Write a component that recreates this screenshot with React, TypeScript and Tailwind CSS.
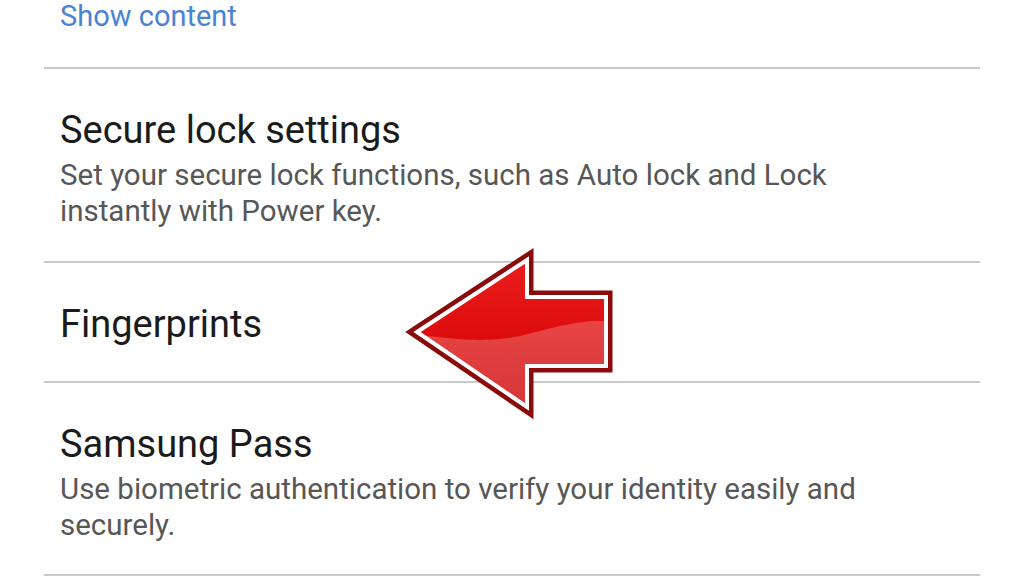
import React from "react";

const Divider = () => <div className="h-[2px] bg-[#c9c9c9]" />;

const RedArrow = () => (
  <svg
    className="absolute left-[396px] top-[244px]"
    width="230"
    height="182"
    viewBox="396 244 230 182"
  >
    <defs>
      <linearGradient id="arrowRed" x1="0" y1="0" x2="0" y2="1">
        <stop offset="0" stopColor="#ea1c1c" />
        <stop offset="0.55" stopColor="#dc0c0c" />
        <stop offset="1" stopColor="#c80a0a" />
      </linearGradient>
      <linearGradient id="arrowGloss" x1="0" y1="0" x2="0" y2="1">
        <stop offset="0" stopColor="#e84444" />
        <stop offset="1" stopColor="#d23434" />
      </linearGradient>
      <clipPath id="arrowClip">
        <polygon points="417,332 527,260 527,297 606,297 606,366 527,366 527,407" />
      </clipPath>
    </defs>
    <polygon
      points="417,332 527,260 527,297 606,297 606,366 527,366 527,407"
      fill="#8a0b0b"
      stroke="#8a0b0b"
      strokeWidth="13"
      strokeLinejoin="miter"
      strokeMiterlimit="6"
    />
    <polygon
      points="417,332 527,260 527,297 606,297 606,366 527,366 527,407"
      fill="url(#arrowRed)"
    />
    <g clipPath="url(#arrowClip)">
      <path
        d="M410 334 C 450 338, 480 344, 520 336 C 555 328, 580 318, 615 322 L 615 420 L 410 420 Z"
        fill="url(#arrowGloss)"
      />
    </g>
    <polygon
      points="417,332 527,260 527,297 606,297 606,366 527,366 527,407"
      fill="none"
      stroke="#ffffff"
      strokeWidth="4"
      strokeLinejoin="miter"
      strokeMiterlimit="6"
    />
  </svg>
);

export default function App() {
  return (
    <div
      className="relative w-[1024px] h-[576px] overflow-hidden bg-white"
      style={{ fontFamily: "Roboto, 'Noto Sans', sans-serif" }}
    >
      <div className="flex flex-col pl-[44px] w-[980px]">
        {/* Show content */}
        <div className="pl-4 pb-[35px]">
          <p className="text-[29px] leading-[32px] text-[#4a82d4]">Show content</p>
        </div>
        <Divider />

        {/* Secure lock settings */}
        <div className="pl-4 pt-[39px] pb-[32px]">
          <p className="text-[38px] leading-[44px] text-[#1b1b1b]">Secure lock settings</p>
          <p className="mt-[5px] text-[29.5px] leading-[36px] text-[#575757]">
            Set your secure lock functions, such as Auto lock and Lock
            <br />
            instantly with Power key.
          </p>
        </div>
        <Divider />

        {/* Fingerprints */}
        <div className="pl-4 pt-[39px] pb-[35px]">
          <p className="text-[38px] leading-[44px] text-[#1b1b1b]">Fingerprints</p>
        </div>
        <Divider />

        {/* Samsung Pass */}
        <div className="pl-4 pt-[39px] pb-[31px]">
          <p className="text-[38px] leading-[44px] text-[#1b1b1b]">Samsung Pass</p>
          <p className="mt-[5px] text-[29.5px] leading-[36px] text-[#575757]">
            Use biometric authentication to verify your identity easily and
            <br />
            securely.
          </p>
        </div>
        <Divider />
      </div>

      <RedArrow />
    </div>
  );
}
